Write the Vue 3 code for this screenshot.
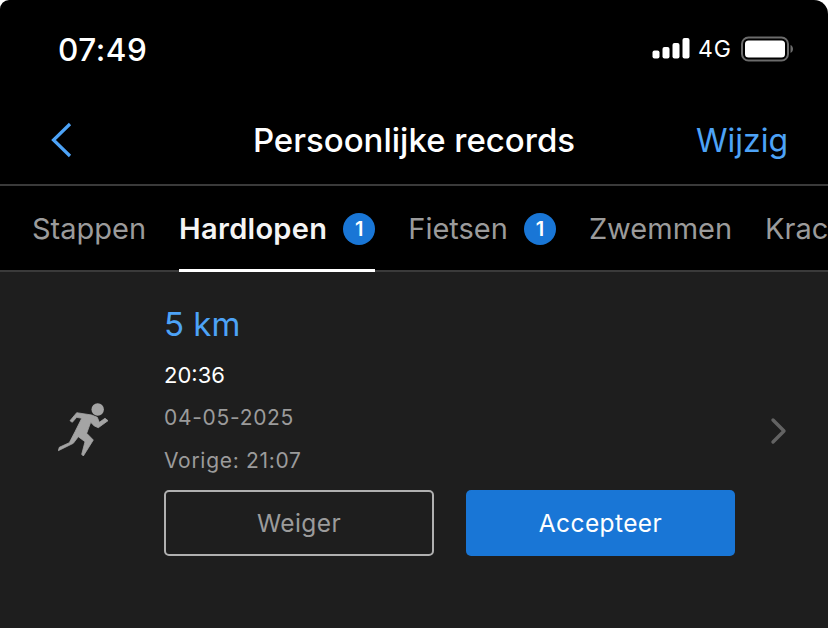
<template>
  <div class="screen">
    <header class="top">
      <div class="status">
        <span class="time">07:49</span>
        <div class="status-right">
          <svg class="signal" width="38" height="24" viewBox="0 0 38 24">
            <rect x="0.5" y="13.5" width="7" height="8" rx="2" />
            <rect x="10.5" y="10" width="7" height="11.500" rx="2" />
            <rect x="20.5" y="6" width="7" height="15.500" rx="2" />
            <rect x="30.5" y="1" width="7" height="20.500" rx="2" />
          </svg>
          <span class="network">4G</span>
          <svg class="battery" width="52" height="26" viewBox="0 0 52 26">
            <rect x="1" y="1.5" width="46" height="23" rx="6.500" fill="none" stroke="#6b6b6b" stroke-width="2" />
            <rect x="4" y="4.5" width="40" height="17" rx="3.500" fill="#fff" />
            <path d="M49.500 9v8c1.500-.6 2.500-2.200 2.500-4s-1-3.400-2.500-4z" fill="#6b6b6b" />
          </svg>
        </div>
      </div>
      <div class="nav">
        <svg class="back" width="22" height="36" viewBox="0 0 22 36">
          <path d="M20 2 3.500 18 20 34" fill="none" stroke="#4da3f7" stroke-width="3.200" />
        </svg>
        <h1>Persoonlijke records</h1>
        <span class="edit">Wijzig</span>
      </div>
    </header>

    <nav class="tabs">
      <div v-for="tab in tabs" :key="tab.name" class="tab" :class="{ active: tab.active }">
        <span>{{ tab.name }}</span>
        <span v-if="tab.count" class="badge">{{ tab.count }}</span>
      </div>
    </nav>

    <main class="content">
      <section class="record">
        <div class="record-icon">
          <svg width="54" height="56" viewBox="0 -2 54 56" fill="#a4a4a4">
            <circle cx="39.700" cy="6.500" r="6.200" />
            <path stroke="#a4a4a4" stroke-width="0.8" stroke-linejoin="round" d="M12 17.700 18.700 9.700 33.700 12 39.300 14.300 41.300 19.300 47 15.300 50 17.700 40.300 24.700 36.300 23 32.700 19.300 28.700 30.300 35.300 37 25.300 53 23.700 51.300 27 38.700 20.300 33.700 15.300 40.300 .3 47.700 1.300 44.300 11.300 39.700 17 28.700 23.700 15.300 18.700 14.300 14.300 19.300Z" />
          </svg>
        </div>
        <div class="record-body">
          <div class="distance">5 km</div>
          <div class="value">20:36</div>
          <div class="meta">04-05-2025</div>
          <div class="meta">Vorige: 21:07</div>
          <div class="actions">
            <button class="btn decline">Weiger</button>
            <button class="btn accept">Accepteer</button>
          </div>
        </div>
        <svg class="chevron" width="18" height="28" viewBox="0 0 18 28">
          <path d="M3 3 14 14 3 25" fill="none" stroke="#636363" stroke-width="3.400" stroke-linecap="round" stroke-linejoin="round" />
        </svg>
      </section>
      <div class="next-record">
        <div class="distance">1 km</div>
      </div>
    </main>
  </div>
</template>

<script setup>
const tabs = [
  { name: 'Stappen' },
  { name: 'Hardlopen', count: 1, active: true },
  { name: 'Fietsen', count: 1 },
  { name: 'Zwemmen' },
  { name: 'Krachttraining' }
]
</script>

<style>
html, body {
  margin: 0;
  background: #fff;
  overflow: hidden;
}
</style>

<style scoped>
.screen {
  width: 828px;
  height: 628px;
  overflow: hidden;
  background: #000;
  color: #fff;
  border-radius: 9px 14px 0 0;
  font-family: Inter, "Liberation Sans", sans-serif;
  display: flex;
  flex-direction: column;
}
.top {
  height: 184px;
  border-bottom: 2px solid #3a3a3a;
}
.status {
  height: 98px;
  display: flex;
  justify-content: space-between;
  align-items: center;
  padding: 0 35px 0 58px;
}
.time {
  font-size: 31.500px;
  font-weight: 500;
  letter-spacing: 0.5px;
}
.status-right {
  display: flex;
  align-items: center;
  gap: 8px;
}
.signal rect {
  fill: #fff;
}
.network {
  font-size: 23px;
  letter-spacing: 1px;
}
.battery {
  margin-left: 1px;
}
.nav {
  height: 86px;
  display: flex;
  align-items: center;
  justify-content: space-between;
  padding: 0 40px 2px 50px;
  box-sizing: border-box;
  position: relative;
}
.nav h1 {
  position: absolute;
  left: 0;
  right: 0;
  margin: 0;
  text-align: center;
  font-size: 33px;
  font-weight: 500;
}
.edit {
  font-size: 32px;
  color: #4da3f7;
}
.tabs {
  height: 84px;
  flex-shrink: 0;
  display: flex;
  gap: 33px;
  padding-left: 32px;
  border-bottom: 2px solid #3a3a3a;
  white-space: nowrap;
  font-size: 29px;
  color: #9b9b9b;
}
.tab {
  display: flex;
  align-items: center;
  gap: 16px;
  height: 86px;
  box-sizing: border-box;
  padding-bottom: 1px;
}
.tab.active {
  color: #f4f4f4;
  font-weight: 600;
  letter-spacing: 0.3px;
  border-bottom: 3px solid #fff;
  padding-top: 3px;
}
.badge {
  width: 32px;
  height: 32px;
  border-radius: 50%;
  background: #1976d6;
  color: #fff;
  font-size: 20px;
  font-weight: 600;
  display: flex;
  align-items: center;
  justify-content: center;
}
.content {
  flex: 1;
  min-height: 0;
  background: #1e1e1e;
}
.record {
  display: flex;
  align-items: center;
  height: 318px;
  padding: 0 40px 0 58px;
}
.record-icon {
  width: 106px;
  flex-shrink: 0;
}
.record-body {
  flex: 1;
  padding-bottom: 2px;
}
.distance {
  color: #4da3f7;
  font-size: 33px;
  line-height: 38px;
  margin-bottom: 18px;
}
.value {
  font-size: 22px;
  line-height: 28px;
  margin-bottom: 15px;
}
.meta {
  color: #9b9b9b;
  font-size: 21px;
  line-height: 28px;
  margin-bottom: 15px;
  letter-spacing: 0.7px;
}
.actions {
  display: flex;
  gap: 32px;
}
.btn {
  width: 270px;
  height: 66px;
  border-radius: 5px;
  font-family: inherit;
  font-size: 24.500px;
  letter-spacing: 0.4px;
  box-sizing: border-box;
}
.decline {
  background: transparent;
  border: 2px solid #b0b0b0;
  color: #9b9b9b;
}
.accept {
  width: 269px;
  background: #1976d6;
  border: none;
  color: #fff;
}
.chevron {
  flex-shrink: 0;
  margin-left: 33px;
}
.next-record {
  padding: 31px 0 0 164px;
}
</style>
